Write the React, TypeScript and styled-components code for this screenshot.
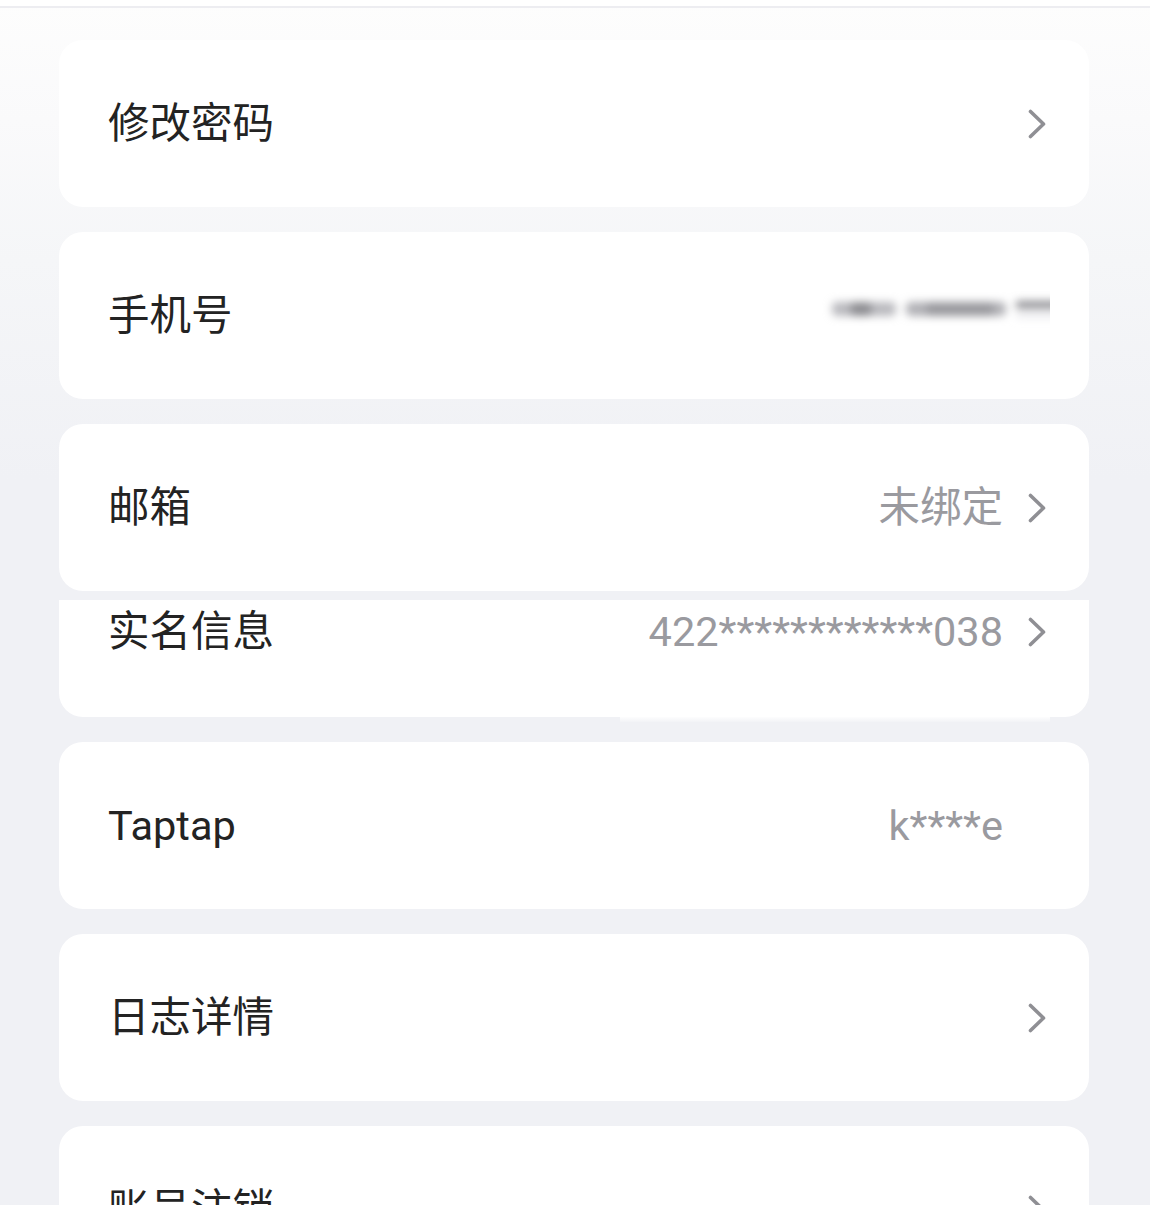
import React from "react";
import styled, { createGlobalStyle } from "styled-components";

const Global = createGlobalStyle`
  html, body { margin: 0; padding: 0; overflow: hidden; background: #f0f1f5; }
  * { box-sizing: border-box; }
`;

const Page = styled.div`
  width: 1150px;
  height: 1205px;
  overflow: hidden;
  background: linear-gradient(to bottom, #fdfdfd 0px, #fafafb 120px, #f5f6f8 260px, #f0f1f5 480px, #f0f1f5 100%);
  font-family: Roboto, "Noto Sans CJK SC", "Noto Sans", sans-serif;
`;

const TopBar = styled.div`
  height: 8px;
  background: #ffffff;
  border-bottom: 2px solid #ededf1;
`;

const List = styled.div`
  display: flex;
  flex-direction: column;
  gap: 25px;
  padding: 32px 0 0 59px;
  width: 1089px;
`;

const Card = styled.div<{ $clipped?: boolean }>`
  position: relative;
  background: #ffffff;
  height: ${(p) => (p.$clipped ? 117 : 167)}px;
  margin-top: ${(p) => (p.$clipped ? -16 : 0)}px;
  border-radius: ${(p) => (p.$clipped ? "0 0 24px 24px" : "24px")};
  display: flex;
  align-items: ${(p) => (p.$clipped ? "flex-start" : "center")};
  padding: ${(p) => (p.$clipped ? "8px 43px 0 49px" : "0 43px 0 49px")};
  flex-shrink: 0;
  ${(p) =>
    p.$clipped &&
    `&::after {
      content: "";
      position: absolute;
      left: 561px;
      width: 430px;
      top: 117px;
      height: 5px;
      background: linear-gradient(to bottom, #fdfdfe, #f2f3f6);
    }`}
`;

const Label = styled.div`
  flex: 1;
  font-size: 41.5px;
  line-height: 48px;
  color: #232323;
`;

const Value = styled.div`
  font-size: 41.5px;
  line-height: 48px;
  color: #9a9a9f;
  white-space: nowrap;
`;

const ChevronSlot = styled.div<{ $empty?: boolean }>`
  width: 18px;
  height: 48px;
  margin-left: 25px;
  display: flex;
  align-items: center;
  justify-content: center;
  visibility: ${(p) => (p.$empty ? "hidden" : "visible")};
`;

const BlurSvg = styled.svg`
  display: block;
  margin-right: -4px;
  margin-top: -10px;
`;

const Chevron = () => (
  <svg width="18" height="30" viewBox="0 0 18 30" fill="none">
    <path d="M2.5 2.5 L15.5 15 L2.5 27.5" stroke="#8f8f94" strokeWidth="3.6" strokeLinecap="round" strokeLinejoin="round" />
  </svg>
);

const PhoneBlur = () => (
  <BlurSvg width="240" height="40" viewBox="0 0 240 40">
    <defs>
      <filter id="pb" x="-20%" y="-100%" width="140%" height="300%">
        <feGaussianBlur stdDeviation="4.2" />
      </filter>
    </defs>
    <g filter="url(#pb)">
      <rect x="22" y="11" width="64" height="14" rx="5" fill="#b9b9be" />
      <rect x="40" y="11" width="22" height="14" rx="5" fill="#8c8c91" />
      <rect x="96" y="11" width="100" height="14" rx="5" fill="#b0b0b5" />
      <rect x="116" y="11" width="68" height="14" rx="5" fill="#98989d" />
      <rect x="206" y="10" width="50" height="8" rx="2" fill="#8e8e93" />
      <rect x="206" y="21" width="50" height="6" rx="2" fill="#ebebee" />
    </g>
  </BlurSvg>
);

type Row = {
  label: string;
  value?: React.ReactNode;
  chevron: boolean;
  clipped?: boolean;
};

const rows: Row[] = [
  { label: "修改密码", chevron: true },
  { label: "手机号", value: <PhoneBlur />, chevron: false },
  { label: "邮箱", value: "未绑定", chevron: true },
  { label: "实名信息", value: "422************038", chevron: true, clipped: true },
  { label: "Taptap", value: "k****e", chevron: false },
  { label: "日志详情", chevron: true },
  { label: "账号注销", chevron: true },
];

export default function App() {
  return (
    <Page>
      <Global />
      <TopBar />
      <List>
        {rows.map((r) => (
          <Card key={r.label} $clipped={r.clipped}>
            <Label>{r.label}</Label>
            {typeof r.value === "string" ? <Value>{r.value}</Value> : r.value}
            {typeof r.value === "object" ? null : (
              <ChevronSlot $empty={!r.chevron}>{r.chevron && <Chevron />}</ChevronSlot>
            )}
          </Card>
        ))}
      </List>
    </Page>
  );
}
